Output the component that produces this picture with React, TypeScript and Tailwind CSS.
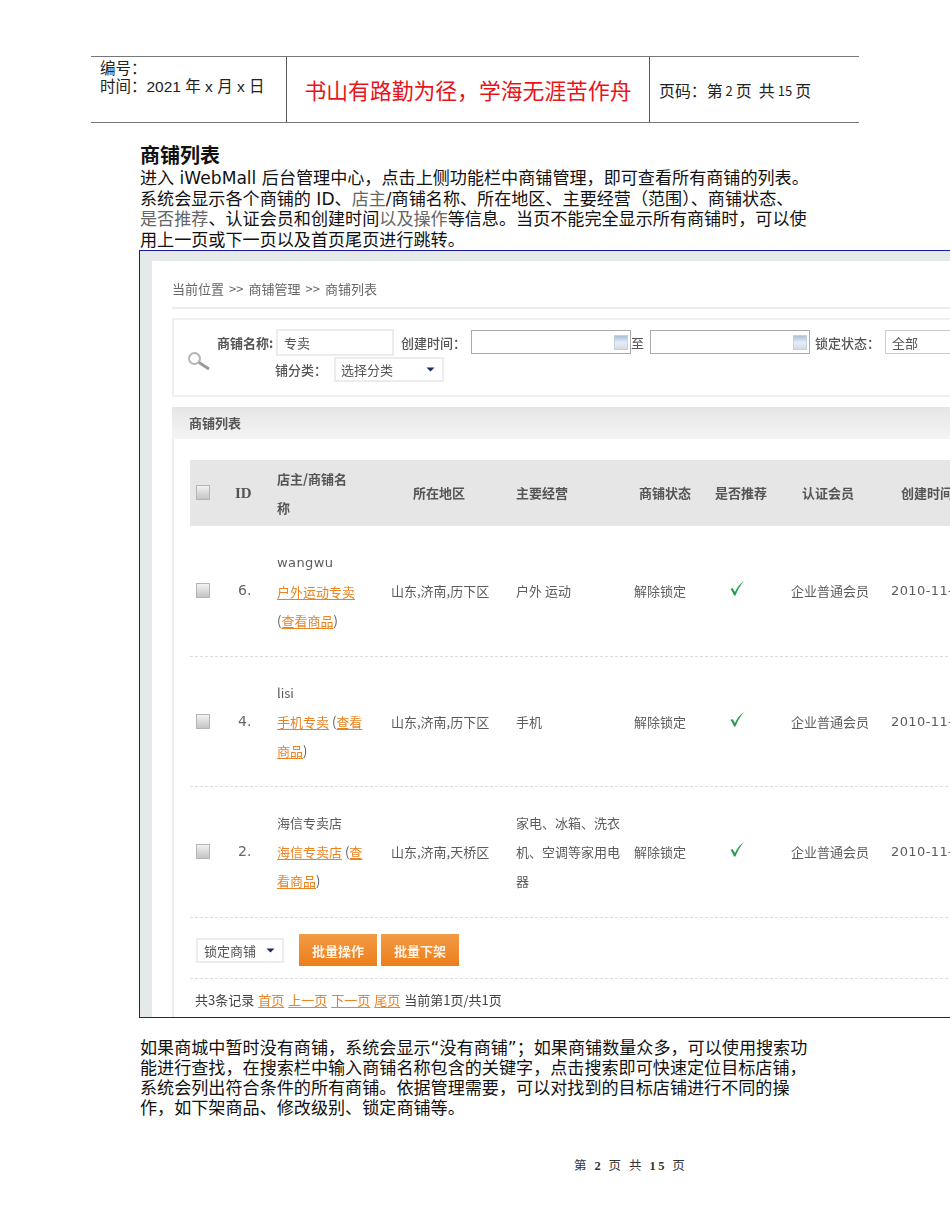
const body = "font-['DejaVu_Sans','Noto_Sans_CJK_SC',sans-serif]";
const cjk = "font-['Noto_Sans_CJK_SC',sans-serif]";

const columns =
  "grid grid-cols-[45px_42px_114px_125px_118px_81px_76px_100px_200px] items-center";

function Box() {
  return (
    <div className="h-[15px] w-[14px] border border-[#b5b5b5] bg-linear-to-b from-[#f2f2f2] to-[#c4c4c4]" />
  );
}

function Arrow() {
  return (
    <svg width="9" height="5" viewBox="0 0 9 5">
      <path d="M0.5 0.5h8l-4 4z" fill="#1c2a66" />
    </svg>
  );
}

function CalendarIcon() {
  return (
    <div className="h-[15px] w-[14px] border border-[#c5d2e2] bg-linear-to-b from-[#a9c0dc] via-[#e7edf5] to-[#d5dbe4]" />
  );
}

function Check() {
  return (
    <svg width="16" height="16" viewBox="0 0 16 16" className="mb-[5px] ml-[14px]">
      <path d="M1.5 9 L3.5 8 L6 12 C8 7.5 11 3.5 15 1 C11.5 5 8.5 10 6.5 15.5 L5 15.5 C4 13 3 11 1.5 9z" fill="#2c9a52" />
    </svg>
  );
}

function L({ children }: { children: React.ReactNode }) {
  return <a className="text-[#ea8423] underline underline-offset-2">{children}</a>;
}

function Row({
  id,
  height,
  name,
  area,
  biz,
}: {
  id: string;
  height: string;
  name: React.ReactNode;
  area: string;
  biz: React.ReactNode;
}) {
  return (
    <div className={`${columns} ${height} border-b border-dashed border-[#dcdcdc] text-[#5c5c5c]`}>
      <div className="pl-[6px]">
        <Box />
      </div>
      <div className="pl-[3px] font-['DejaVu_Sans'] text-[14px] text-[#666]">{id}</div>
      <div className="whitespace-nowrap leading-[29px]">{name}</div>
      <div className="whitespace-nowrap">{area}</div>
      <div className="whitespace-nowrap leading-[29px]">{biz}</div>
      <div className="whitespace-nowrap">解除锁定</div>
      <div>
        <Check />
      </div>
      <div className="whitespace-nowrap">企业普通会员</div>
      <div className="whitespace-nowrap font-['DejaVu_Sans'] text-[13px] tracking-[0.4px]">2010-11-12</div>
    </div>
  );
}

export default function App() {
  return (
    <div className={`h-[1230px] w-[950px] overflow-hidden bg-white pt-[56px] text-black ${body}`}>
      {/* page header */}
      <div className="ml-[91px] flex h-[67px] w-[768px] border-y border-[#777]">
        <div className="w-[196px] border-r border-[#555] pl-[9px] pt-[1px] text-[15.5px] leading-[19px] text-[#222]">
          <div className={cjk}>编号：</div>
          <div className="font-['Liberation_Sans','Noto_Sans_CJK_SC',sans-serif] whitespace-nowrap">时间：2021 年 x 月 x 日</div>
        </div>
        <div className={`flex w-[363px] items-center justify-center border-r border-[#555] pt-[2px] text-[21.8px] text-[#e8141a] ${cjk}`}>
          书山有路勤为径，学海无涯苦作舟
        </div>
        <div className={`flex items-center pl-[9px] pt-[2px] text-[15.9px] text-[#222] whitespace-nowrap ${cjk}`}>
          页码：第 <span className="mx-[3px] text-[13px]">2</span> 页&nbsp;&nbsp;共 <span className="mx-[3px] text-[13px]">15</span> 页
        </div>
      </div>

      {/* intro */}
      <div className="ml-[140px] mt-[18px] text-[17.1px] leading-[20.7px] text-[#111]">
        <h1 className={`text-[20px] font-bold leading-[27px] ${cjk}`}>商铺列表</h1>
        <p className="whitespace-nowrap">进入 iWebMall 后台管理中心，点击上侧功能栏中商铺管理，即可查看所有商铺的列表。</p>
        <p className="whitespace-nowrap">
          系统会显示各个商铺的 ID、<span className="text-[#666]">店主</span>/商铺名称、所在地区、主要经营（范围）、商铺状态、
        </p>
        <p className="whitespace-nowrap">
          <span className="text-[#666]">是否推荐</span>、认证会员和创建时间<span className="text-[#666]">以及操作</span>等信息。当页不能完全显示所有商铺时，可以使
        </p>
        <p className="whitespace-nowrap">用上一页或下一页以及首页尾页进行跳转。</p>
      </div>

      {/* embedded screenshot */}
      <div className="ml-[139px] mt-[-1px] h-[768px] w-[900px] border border-[#1a1a9c] bg-[#e6e9e9] pl-[12px] pt-[10px]">
        <div className={`h-[756px] overflow-hidden bg-white pl-[20px] text-[13px] text-[#555] blur-[0.5px] ${cjk}`}>
          <div className="flex h-[48px] items-end gap-[5px] border-b-2 border-[#ececec] pb-[8px] text-[#666]">
            <span>当前位置</span>
            <span>&gt;&gt;</span>
            <span>商铺管理</span>
            <span>&gt;&gt;</span>
            <span>商铺列表</span>
          </div>

          {/* search */}
          <div className="mt-[9px] flex h-[79px] border-y-2 border-l-2 border-[#efefef]">
            <div className="flex w-[42px] shrink-0 items-center justify-end pt-[7px]">
              <svg width="24" height="20" viewBox="0 0 24 20" className="mr-[5px]" fill="none">
                <circle cx="7.5" cy="7.5" r="5.5" stroke="#b4b4b4" strokeWidth="2" />
                <path d="M12 11.5 L22 18" stroke="#9a9a9a" strokeWidth="3" />
              </svg>
            </div>
            <div className="pt-[9px]">
              <div className="flex items-center whitespace-nowrap">
                <span className="w-[60px] pl-[1px] font-bold">商铺名称:</span>
                <div className="flex h-[27px] w-[118px] items-center border-2 border-[#ececec] pl-[6px]">专卖</div>
                <span className="ml-[7px] w-[70px] font-medium">创建时间：</span>
                <div className="flex h-[24px] w-[160px] items-center justify-end border border-[#aaa] pr-[2px]">
                  <CalendarIcon />
                </div>
                <span className="w-[19px]">至</span>
                <div className="flex h-[24px] w-[160px] items-center justify-end border border-[#aaa] pr-[2px]">
                  <CalendarIcon />
                </div>
                <span className="ml-[5px] w-[70px] font-medium">锁定状态：</span>
                <div className="flex h-[24px] w-[120px] items-center border border-[#ccc] pl-[6px]">全部</div>
              </div>
              <div className="mt-[1px] flex items-center whitespace-nowrap pl-[59px]">
                <span className="w-[59px] font-medium">铺分类：</span>
                <div className="flex h-[25px] w-[110px] items-center justify-between border-2 border-[#ececec] pl-[5px] pr-[7px]">
                  选择分类
                  <Arrow />
                </div>
              </div>
            </div>
          </div>

          {/* list */}
          <div className="mt-[10px] flex h-[32px] items-center bg-linear-to-b from-[#e6e6e6] to-[#f4f4f4] pl-[17px] font-bold">
            商铺列表
          </div>
          <div className="h-[580px] border-l-2 border-[#ececec] pl-[16px] pt-[21px]">
            <div className={`${columns} h-[66px] bg-[#e6e6e6] font-bold text-[#555]`}>
              <div className="pl-[6px]">
                <Box />
              </div>
              <div className="font-['Liberation_Serif'] text-[15px]">ID</div>
              <div className="leading-[29px]">
                店主/商铺名
                <br />称
              </div>
              <div className="pl-[22px]">所在地区</div>
              <div>主要经营</div>
              <div className="pl-[5px]">商铺状态</div>
              <div>是否推荐</div>
              <div className="pl-[11px]">认证会员</div>
              <div className="pl-[10px]">创建时间</div>
            </div>

            <Row
              id="6."
              height="h-[131px]"
              name={
                <>
                  <span className="font-['DejaVu_Sans'] text-[13px] tracking-[0.4px]">wangwu</span>
                  <br />
                  <L>户外运动专卖</L>
                  <br />(<L>查看商品</L>)
                </>
              }
              area="山东,济南,历下区"
              biz="户外 运动"
            />
            <Row
              id="4."
              height="h-[130px]"
              name={
                <>
                  lisi
                  <br />
                  <L>手机专卖</L> (<L>查看</L>
                  <br />
                  <L>商品</L>)
                </>
              }
              area="山东,济南,历下区"
              biz="手机"
            />
            <Row
              id="2."
              height="h-[131px]"
              name={
                <>
                  海信专卖店
                  <br />
                  <L>海信专卖店</L> (<L>查</L>
                  <br />
                  <L>看商品</L>)
                </>
              }
              area="山东,济南,天桥区"
              biz={
                <>
                  家电、冰箱、洗衣
                  <br />
                  机、空调等家用电
                  <br />器
                </>
              }
            />

            <div className="flex h-[61px] items-center gap-[4px] border-b border-dashed border-[#dcdcdc] pl-[6px] pt-[5px]">
              <div className="mr-[11px] flex h-[25px] w-[88px] items-center justify-between border-2 border-[#ececec] pl-[6px] pr-[7px]">
                锁定商铺
                <Arrow />
              </div>
              <button className="h-[32px] w-[78px] bg-linear-to-b from-[#f29a45] to-[#ec7e16] font-bold text-[#fff3e4]">批量操作</button>
              <button className="h-[32px] w-[78px] bg-linear-to-b from-[#f29a45] to-[#ec7e16] font-bold text-[#fff3e4]">批量下架</button>
            </div>
            <div className="flex gap-[4px] whitespace-nowrap pl-[5px] pt-[11px] text-[#444]">
              <span>共3条记录</span>
              <L>首页</L>
              <L>上一页</L>
              <L>下一页</L>
              <L>尾页</L>
              <span>当前第1页/共1页</span>
            </div>
          </div>
        </div>
      </div>

      {/* outro */}
      <div className="ml-[140px] mt-[20px] text-[17.1px] leading-[20px] text-[#111]">
        <p className="whitespace-nowrap">如果商城中暂时没有商铺，系统会显示“没有商铺”；如果商铺数量众多，可以使用搜索功</p>
        <p className="whitespace-nowrap">能进行查找，在搜索栏中输入商铺名称包含的关键字，点击搜索即可快速定位目标店铺，</p>
        <p className="whitespace-nowrap">系统会列出符合条件的所有商铺。依据管理需要，可以对找到的目标店铺进行不同的操</p>
        <p className="whitespace-nowrap">作，如下架商品、修改级别、锁定商铺等。</p>
      </div>

      <div className="ml-[574px] mt-[39px] whitespace-nowrap font-['Liberation_Serif','Noto_Sans_CJK_SC',serif] text-[12.5px] tracking-[2.4px] text-[#333]">
        第 <b>2</b> 页 共 <b>15</b> 页
      </div>
    </div>
  );
}
